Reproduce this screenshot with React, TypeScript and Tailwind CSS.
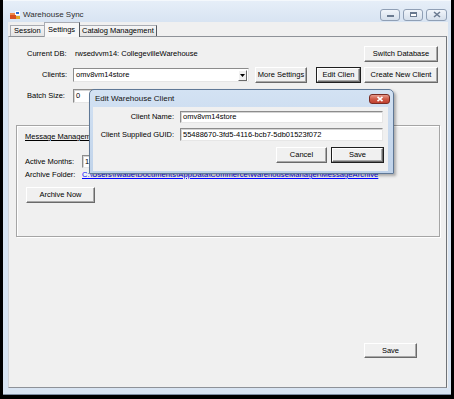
import React from "react";

function Btn({
  children,
  className,
  focused,
}: {
  children: React.ReactNode;
  className: string;
  focused?: boolean;
}) {
  if (focused) {
    return (
      <div className={`flex border border-[#1f1f1f] ${className}`}>
        <div className="flex flex-1 items-center justify-center border-t border-l border-t-white border-l-white border-b border-r border-b-[#6a6a6a] border-r-[#6a6a6a] bg-[#f0f0f0] shadow-[inset_-1px_-1px_0_#a9a9a9]">
          {children}
        </div>
      </div>
    );
  }
  return (
    <div
      className={`flex items-center justify-center border-t border-l border-t-white border-l-white border-b border-r border-b-[#6a6a6a] border-r-[#6a6a6a] bg-[#f0f0f0] shadow-[inset_-1px_-1px_0_#a9a9a9] ${className}`}
    >
      {children}
    </div>
  );
}

function TextBox({ value, className }: { value: string; className: string }) {
  return (
    <div
      className={`flex items-center overflow-hidden whitespace-nowrap border-t border-l border-t-[#8c8c8c] border-l-[#8c8c8c] border-b border-r border-b-[#e6e6e6] border-r-[#e6e6e6] bg-white pl-[2px] shadow-[inset_1px_1px_0_#d4d4d4] ${className}`}
    >
      {value}
    </div>
  );
}

function CaptionBtn({ kind, className }: { kind: "min" | "max" | "close"; className: string }) {
  return (
    <div
      className={`flex items-center justify-center rounded-[3px] border border-[#8f9fb5] bg-gradient-to-b from-[#f1f5fa] to-[#d5dfeb] ${className}`}
    >
      {kind === "min" && <div className="mt-[3px] h-[2px] w-[7px] border border-[#6a7a90] bg-white" />}
      {kind === "max" && <div className="h-[5px] w-[7px] border border-[#6a7a90] border-t-2 bg-white" />}
      {kind === "close" && (
        <svg width="8" height="7" viewBox="0 0 8 7">
          <path d="M1 1 L7 6 M7 1 L1 6" stroke="#6a7a90" strokeWidth="1.6" />
        </svg>
      )}
    </div>
  );
}

export default function App() {
  const folder =
    "C:\\Users\\rwade\\Documents\\AppData\\Commerce\\WarehouseManager\\MessageArchive";
  return (
    <div className="relative h-[399px] w-[454px] overflow-hidden bg-black font-['Liberation_Sans',Arial,sans-serif] text-[7.5px] leading-[10px] text-black">
      {/* Main window */}
      <div className="ml-[3px] flex h-[395px] w-[448px] flex-col border-b border-t border-b-[#7f8fa3] border-t-[#f4f8fc] bg-[#d8e4f2]">
        {/* Title bar */}
        <div className="flex h-[21px] shrink-0 items-center bg-gradient-to-b from-[#e6eef8] to-[#d8e4f2] pl-[7px] pr-[4px] pt-[6px]">
          <svg width="10" height="8" viewBox="0 0 10 8">
            <rect x="0" y="2" width="6" height="6" fill="#d8501f" />
            <rect x="0" y="2" width="6" height="2" fill="#ef8a4a" />
            <rect x="5" y="0" width="5" height="4" fill="#ffffff" />
            <rect x="6" y="1" width="3" height="2" fill="#2f6fd0" />
            <rect x="6" y="5" width="4" height="3" fill="#e0a82a" />
          </svg>
          <span className="ml-[3px] text-[8px] text-[#2e2e2e]">Warehouse Sync</span>
          <div className="ml-auto flex gap-[3px]">
            <CaptionBtn kind="min" className="h-[12px] w-[20px]" />
            <CaptionBtn kind="max" className="h-[12px] w-[20px]" />
            <CaptionBtn kind="close" className="h-[12px] w-[21px]" />
          </div>
        </div>

        {/* Client area */}
        <div className="ml-[5px] flex h-[366px] w-[440px] shrink-0 flex-col bg-[#f0f0f0]">
          {/* Tab strip */}
          <div className="relative z-10 flex h-[14px] shrink-0 items-end pl-[2px]">
            <div className="flex h-[11px] w-[34px] items-center border-l border-t border-[#a9acb3] bg-gradient-to-b from-[#f6f6f6] to-[#e4e4e4] pl-[3px]">
              Session
            </div>
            <div className="mb-[-1px] flex h-[15px] w-[36px] items-start border-l border-r border-t border-l-[#a9acb3] border-r-[#55595f] border-t-[#a9acb3] bg-[#f7f7f7] pl-[3px] pt-[2px]">
              Settings
            </div>
            <div className="flex h-[11px] w-[77px] items-center border-r border-t border-r-[#55595f] border-t-[#a9acb3] bg-gradient-to-b from-[#f6f6f6] to-[#e4e4e4] pl-[2px]">
              Catalog Management
            </div>
          </div>

          {/* Tab page */}
          <div className="flex h-[352px] w-[439px] shrink-0 flex-col border border-b-[#8e9298] border-l-[#d2d4d8] border-r-[#6f7378] border-t-[#8e9298] bg-[#f0f0f0]">
            {/* Row 1 */}
            <div className="mt-[9px] flex h-[16px] items-center">
              <div className="ml-[18px] w-[48px]">Current DB:</div>
              <div>rwsedvvm14: CollegevilleWarehouse</div>
              <Btn className="ml-auto mr-[8px] h-[16px] w-[74px]">Switch Database</Btn>
            </div>

            {/* Row 2 */}
            <div className="mt-[5px] flex h-[16px] items-center">
              <div className="w-[58px] text-right">Clients:</div>
              <div className="ml-[6px] flex h-[14px] w-[176px] items-center border-t border-l border-t-[#8c8c8c] border-l-[#8c8c8c] border-b border-r border-b-[#e6e6e6] border-r-[#e6e6e6] bg-white pl-[2px]">
                <span>omv8vm14store</span>
                <div className="ml-auto mr-[1px] flex h-[11px] w-[9px] items-center justify-center border-t border-l border-t-white border-l-white border-b border-r border-b-[#6a6a6a] border-r-[#6a6a6a] bg-[#f0f0f0]">
                  <svg width="5" height="3" viewBox="0 0 5 3">
                    <path d="M0 0 H5 L2.5 3 Z" fill="#000" />
                  </svg>
                </div>
              </div>
              <Btn className="ml-[6px] h-[16px] w-[52px]">More Settings</Btn>
              <Btn focused className="ml-[9px] h-[16px] w-[45px]">Edit Clien</Btn>
              <Btn className="ml-[3px] h-[16px] w-[74px]">Create New Client</Btn>
            </div>

            {/* Row 3 */}
            <div className="mt-[6px] flex h-[14px] items-center">
              <div className="ml-[18px] w-[46px]">Batch Size:</div>
              <TextBox value="0" className="h-[14px] w-[26px]" />
            </div>

            {/* Group box */}
            <div className="ml-[7px] mt-[22px] flex h-[112px] w-[424px] flex-col border border-[#a5a5a5] shadow-[inset_1px_1px_0_#ffffff,1px_1px_0_#ffffff]">
              <div className="ml-[8px] mt-[6px] underline">Message Management</div>
              <div className="mt-[13px] flex h-[13px] items-center">
                <div className="ml-[8px] w-[57px]">Active Months:</div>
                <TextBox value="12" className="h-[13px] w-[30px]" />
              </div>
              <div className="mt-[2px] flex h-[10px] items-center">
                <div className="ml-[8px] w-[57px]">Archive Folder:</div>
                <div className="whitespace-nowrap tracking-[0.1px] text-[#0000ff] underline">{folder}</div>
              </div>
              <Btn className="ml-[9px] mt-[7px] h-[16px] w-[69px]">Archive Now</Btn>
            </div>

            <Btn className="ml-[355px] mt-[106px] h-[15px] w-[53px]">Save</Btn>
          </div>
        </div>
      </div>

      {/* Dialog */}
      <div className="absolute left-[89px] top-[89px] z-20 flex h-[85px] w-[305px] flex-col rounded-t-[5px] border border-[#5f7896] bg-gradient-to-b from-[#d3e2f3] to-[#c0d3ea] shadow-[2px_2px_3px_rgba(0,0,0,0.3)]">
        <div className="flex h-[17px] shrink-0 items-center pl-[5px] pr-[3px]">
          <span className="text-[8px] text-[#111]">Edit Warehouse Client</span>
          <div className="ml-auto flex h-[10px] w-[21px] items-center justify-center rounded-[3px] border border-[#7a2b22] bg-gradient-to-b from-[#e59a8c] via-[#cf5a48] to-[#c0402f]">
            <svg width="8" height="6" viewBox="0 0 8 6">
              <path d="M1.5 0.8 L6.5 5.2 M6.5 0.8 L1.5 5.2" stroke="#ffffff" strokeWidth="1.6" />
            </svg>
          </div>
        </div>
        <div className="ml-[3px] mr-[5px] flex h-[64px] shrink-0 flex-col bg-[#f0f0f0]">
          <div className="mt-[4px] flex h-[12px] items-center">
            <div className="w-[81px] text-right">Client Name:</div>
            <TextBox value="omv8vm14store" className="ml-[6px] h-[12px] w-[203px]" />
          </div>
          <div className="mt-[5px] flex h-[13px] items-center">
            <div className="w-[81px] text-right">Client Supplied GUID:</div>
            <TextBox value="55488670-3fd5-4116-bcb7-5db01523f072" className="ml-[6px] h-[13px] w-[203px]" />
          </div>
          <div className="mt-[6px] flex h-[16px] justify-end gap-[4px] pr-[4px]">
            <Btn className="h-[16px] w-[51px]">Cancel</Btn>
            <Btn focused className="h-[16px] w-[53px]">Save</Btn>
          </div>
        </div>
      </div>
    </div>
  );
}
